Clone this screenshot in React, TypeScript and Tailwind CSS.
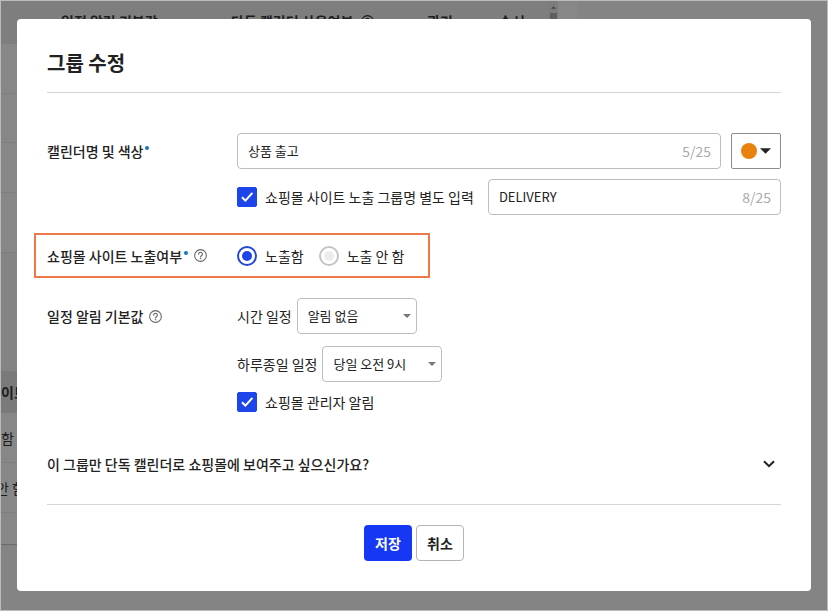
import { useState } from "react";

const headers = [
  { label: "일정 알림 기본값", width: "w-[170px]" },
  { label: "단독 캘린더 사용여부", width: "w-[196px]", help: true },
  { label: "관리", width: "w-[72px]" },
  { label: "순서", width: "w-[50px]" },
];

function HelpIcon() {
  return (
    <svg
      viewBox="0 0 12 12"
      className="size-[13px] shrink-0"
      fill="none"
      stroke="currentColor"
      strokeLinecap="round"
    >
      <circle cx="6" cy="6" r="5.4" />
      <path d="M4.3 4.8a1.7 1.7 0 1 1 2.6 1.4c-.6.4-.9.6-.9 1.2" />
      <circle cx="6" cy="9" r=".3" fill="currentColor" strokeWidth=".5" />
    </svg>
  );
}

function Caret({ className }: { className: string }) {
  return (
    <svg viewBox="0 0 10 5" className={className} fill="currentColor">
      <path d="M0 0h10L5 5z" />
    </svg>
  );
}

function Required() {
  return <span className="mb-1.5 ml-0.5 size-1 rounded-full bg-[#1a73c0]" />;
}

interface CheckProps {
  id: string;
  label: string;
}

function Check({ id, label }: CheckProps) {
  const [checked, setChecked] = useState(true);

  return (
    <label htmlFor={id} className="flex shrink-0 items-center gap-2">
      <span className="grid size-5">
        <input
          id={id}
          type="checkbox"
          checked={checked}
          onChange={(e) => setChecked(e.target.checked)}
          className="col-start-1 row-start-1 size-5 appearance-none rounded-xs border border-gray-400 checked:border-[#1d45ea] checked:bg-[#1d45ea]"
        />
        {checked && (
          <svg
            viewBox="0 0 20 20"
            className="pointer-events-none col-start-1 row-start-1 size-5"
            fill="none"
            stroke="white"
            strokeWidth="2"
          >
            <path d="m5 10.2 3.4 3.4 7-7.8" />
          </svg>
        )}
      </span>
      {label}
    </label>
  );
}

interface CountInputProps {
  label: string;
  initial: string;
}

function CountInput({ label, initial }: CountInputProps) {
  const [value, setValue] = useState(initial);

  return (
    <div className="flex h-9 min-w-0 flex-1 items-center rounded border border-[#bdbdbd] px-[9px]">
      <input
        type="text"
        aria-label={label}
        maxLength={25}
        value={value}
        onChange={(e) => setValue(e.target.value)}
        className="min-w-0 flex-1 px-px text-[13px] outline-none"
      />
      <span className="text-[#ababab]">{value.length}/25</span>
    </div>
  );
}

interface SelectFieldProps {
  id: string;
  label: string;
  options: string[];
}

function SelectField({ id, label, options }: SelectFieldProps) {
  return (
    <div className="flex items-center gap-[5px]">
      <label htmlFor={id}>{label}</label>
      <div className="grid w-[120px] items-center">
        <select
          id={id}
          className="col-start-1 row-start-1 h-9 appearance-none rounded border border-[#bdbdbd] bg-white px-2.5 text-[13px]"
        >
          {options.map((option) => (
            <option key={option}>{option}</option>
          ))}
        </select>
        <Caret className="pointer-events-none col-start-1 row-start-1 mr-1.5 h-1 w-2 justify-self-end text-[#777]" />
      </div>
    </div>
  );
}

function Backdrop() {
  return (
    <div
      aria-hidden="true"
      className="absolute inset-0 flex items-start overflow-hidden bg-[#848484] text-[#1d1d1d]"
    >
      <div className="w-[547px] shrink-0 bg-[#878787]">
        <div className="flex h-[43px] bg-[#7e7e7e] pt-2.5 pl-[60px] font-bold">
          {headers.map((header) => (
            <div
              key={header.label}
              className={`flex h-5 shrink-0 items-center gap-2 whitespace-nowrap ${header.width}`}
            >
              {header.label}
              {header.help && <HelpIcon />}
            </div>
          ))}
        </div>
        <div className="h-[50px] border-b border-[#7e7e7e]" />
        <div className="h-[49px] border-b border-[#7e7e7e]" />
        <div className="h-[50px] border-b border-[#7e7e7e]" />
        <div className="h-[60px] border-b border-[#7e7e7e]" />
        <div className="h-[118px] bg-[#848484]" />
        <div className="flex h-[42px] items-center bg-[#7a7a7a] font-bold">
          이트
        </div>
        <div className="flex h-[50px] items-center border-b border-[#7e7e7e]">
          함
        </div>
        <div className="flex h-[50px] items-center border-b border-[#7e7e7e]">
          <span className="flex w-6 justify-end whitespace-nowrap">안 함</span>
        </div>
        <div className="h-8 border-b border-[#6a6a6a]" />
      </div>
      <div className="flex w-[10px] shrink-0 flex-col items-center gap-1 bg-[#7c7c7c] pt-[5px]">
        <Caret className="h-[3px] w-[5px] rotate-180 text-[#444]" />
        <div className="h-40 w-[7px] bg-[#5e5e5e]" />
      </div>
      <div className="h-[544px] w-5 shrink-0 bg-[#878787]" />
    </div>
  );
}

export default function App() {
  const [exposed, setExposed] = useState(true);

  const radios = [
    { id: "expose-on", label: "노출함", value: true },
    { id: "expose-off", label: "노출 안 함", value: false },
  ];

  return (
    <div className="relative min-h-screen border border-[#bbb] px-4 py-[18px] font-['Noto_Sans_CJK_KR','Noto_Sans',sans-serif] text-sm text-[#222]">
      <Backdrop />

      <form
        role="dialog"
        aria-labelledby="dialog-title"
        onSubmit={(e) => e.preventDefault()}
        className="relative rounded bg-white px-[30px] pt-[29px] pb-[30px]"
      >
        <h1
          id="dialog-title"
          className="border-b border-[#d5d5d5] pb-[15px] text-xl leading-[29px] font-bold"
        >
          그룹 수정
        </h1>

        {/* Name and color */}
        <div className="mt-10 flex">
          <div className="flex h-9 w-[190px] shrink-0 items-center font-medium">
            캘린더명 및 색상
            <Required />
          </div>
          <div className="flex min-w-0 flex-1 flex-col gap-2.5">
            <div className="flex gap-2.5">
              <CountInput label="캘린더명" initial="상품 출고" />
              <button
                type="button"
                aria-label="색상"
                className="flex h-9 w-[50px] items-center justify-center gap-[3px] rounded-xs border border-[#8c8c8c]"
              >
                <span className="size-4 rounded-full bg-[#e8820c]" />
                <Caret className="h-[6px] w-[11px] text-[#222]" />
              </button>
            </div>
            <div className="flex items-center gap-3.5">
              <Check id="site-name" label="쇼핑몰 사이트 노출 그룹명 별도 입력" />
              <CountInput label="노출 그룹명" initial="DELIVERY" />
            </div>
          </div>
        </div>

        {/* Site exposure */}
        <div className="mt-[18px] -ml-[13px] flex h-[45px] w-[396px] items-center border-2 border-[#ec7a48] pl-[11px]">
          <div className="flex w-[190px] shrink-0 items-center font-medium">
            쇼핑몰 사이트 노출여부
            <Required />
            <span className="ml-1.5 text-[#666]">
              <HelpIcon />
            </span>
          </div>
          <div className="flex gap-[15px]">
            {radios.map((radio) => (
              <label
                key={radio.id}
                htmlFor={radio.id}
                className="flex items-center gap-2"
              >
                <input
                  id={radio.id}
                  type="radio"
                  name="exposed"
                  checked={exposed === radio.value}
                  onChange={() => setExposed(radio.value)}
                  className="size-5 appearance-none rounded-full border-2 border-[#c4c4c4] bg-[#ececec] bg-clip-content p-[3px] checked:border-[#2348d8] checked:bg-[#1d45ea]"
                />
                {radio.label}
              </label>
            ))}
          </div>
        </div>

        {/* Notification defaults */}
        <div className="mt-5 flex">
          <div className="flex h-9 w-[190px] shrink-0 items-center font-medium">
            일정 알림 기본값
            <span className="ml-1.5 text-[#666]">
              <HelpIcon />
            </span>
          </div>
          <div className="flex flex-col">
            <SelectField
              id="timed"
              label="시간 일정"
              options={["알림 없음", "10분 전", "1시간 전"]}
            />
            <div className="mt-3">
              <SelectField
                id="all-day"
                label="하루종일 일정"
                options={["당일 오전 9시", "전날 오전 9시"]}
              />
            </div>
            <div className="mt-2.5">
              <Check id="admin-alarm" label="쇼핑몰 관리자 알림" />
            </div>
          </div>
        </div>

        <button
          type="button"
          className="mt-[42px] flex w-full items-center justify-between border-b border-[#d5d5d5] pr-1.5 pb-[30px] text-left font-medium"
        >
          이 그룹만 단독 캘린더로 쇼핑몰에 보여주고 싶으신가요?
          <svg
            viewBox="0 0 12 8"
            className="h-2 w-3"
            fill="none"
            stroke="currentColor"
            strokeWidth="2"
          >
            <path d="m1 1.2 5 5 5-5" />
          </svg>
        </button>

        <div className="mt-5 flex justify-center gap-1">
          <button
            type="submit"
            className="h-9 w-12 rounded bg-[#1638f5] font-bold text-white"
          >
            저장
          </button>
          <button
            type="button"
            className="h-9 w-12 rounded border border-[#b5b5b5] bg-white font-bold"
          >
            취소
          </button>
        </div>
      </form>
    </div>
  );
}
